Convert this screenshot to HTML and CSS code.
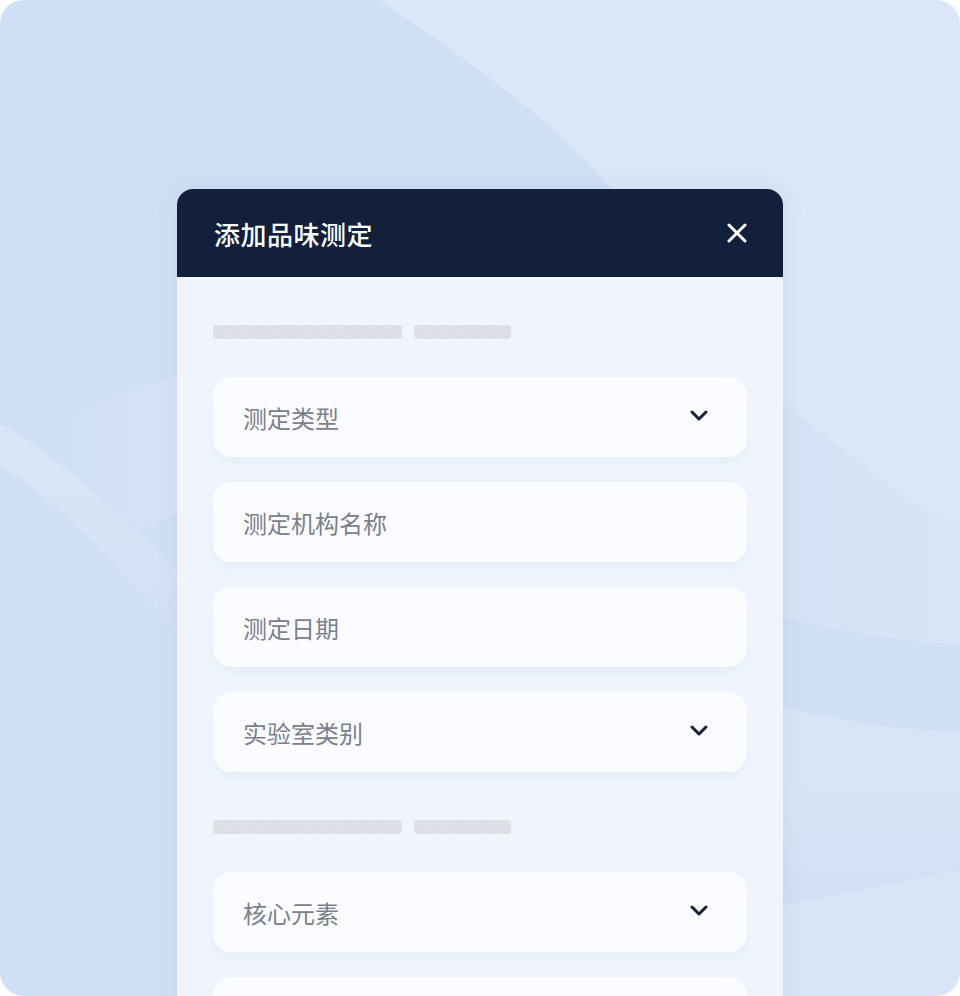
FILE: index.html
```html
<!DOCTYPE html>
<html lang="zh-CN">
<head>
    <meta charset="UTF-8">
    <meta name="viewport" content="width=device-width, initial-scale=1.0">
    <title>添加品味测定</title>
    <link rel="stylesheet" href="styles.css">
</head>
<body>
    <div class="frame">
        <div class="modal">
            <div class="modal-header">
                <h2>添加品味测定</h2>
                <button class="close" aria-label="关闭">
                    <svg width="20" height="20" viewBox="0 0 20 20"><path d="M2 2L18 18M18 2L2 18" stroke="#fff" stroke-width="3" stroke-linecap="round"/></svg>
                </button>
            </div>
            <div class="modal-body">
                <div class="section-label">
                    <span class="bar bar-long"></span>
                    <span class="bar bar-short"></span>
                </div>
                <div class="field-list">
                    <div class="field">
                        <span>测定类型</span>
                        <svg class="chevron" width="18" height="11" viewBox="0 0 18 11"><path d="M2 2L9 9L16 2" fill="none" stroke="#15203a" stroke-width="3" stroke-linecap="round" stroke-linejoin="round"/></svg>
                    </div>
                    <div class="field"><span>测定机构名称</span></div>
                    <div class="field"><span>测定日期</span></div>
                    <div class="field">
                        <span>实验室类别</span>
                        <svg class="chevron" width="18" height="11" viewBox="0 0 18 11"><path d="M2 2L9 9L16 2" fill="none" stroke="#15203a" stroke-width="3" stroke-linecap="round" stroke-linejoin="round"/></svg>
                    </div>
                </div>

                <div class="section-label">
                    <span class="bar bar-long"></span>
                    <span class="bar bar-short"></span>
                </div>
                <div class="field-list">
                    <div class="field">
                        <span>核心元素</span>
                        <svg class="chevron" width="18" height="11" viewBox="0 0 18 11"><path d="M2 2L9 9L16 2" fill="none" stroke="#15203a" stroke-width="3" stroke-linecap="round" stroke-linejoin="round"/></svg>
                    </div>
                    <div class="field"><span></span></div>
                </div>
            </div>
        </div>
    </div>
</body>
</html>
```

FILE: styles.css
```css
body {
    margin: 0;
    padding: 0;
    background-color: #fff;
    font-family: "Noto Sans CJK SC", "Noto Sans", sans-serif;
}

/* wavy backdrop drawn as an svg background */
.frame {
    width: 960px;
    height: 996px;
    border-radius: 24px;
    overflow: hidden;
    box-sizing: border-box;
    padding-top: 189px;
    display: flex;
    justify-content: center;
    align-items: flex-start;
    background-color: #cfdff5;
    background-repeat: no-repeat;
    background-image: url("data:image/svg+xml;utf8,<svg xmlns='http://www.w3.org/2000/svg' width='960' height='996' viewBox='0 0 960 996'><defs><linearGradient id='r1' x1='0' y1='0' x2='1' y2='0'><stop offset='0.6' stop-color='%23d3e1f5'/><stop offset='1' stop-color='%23d9e5f6'/></linearGradient><linearGradient id='r2' x1='0' y1='0' x2='0' y2='1'><stop offset='0.4' stop-color='%23d9e5f6'/><stop offset='1' stop-color='%23d1e0f5'/></linearGradient><linearGradient id='st' x1='0' y1='0' x2='0' y2='1'><stop offset='0.2' stop-color='%23dae5f6'/><stop offset='1' stop-color='%23d1e0f5'/></linearGradient><linearGradient id='ln' x1='0' y1='0' x2='1' y2='0'><stop offset='0.2' stop-color='%23d4e2f5' stop-opacity='0'/><stop offset='1' stop-color='%23d8e4f6'/></linearGradient></defs><path d='M380,0 C450,50 560,120 620,200 L700,520 C730,590 755,610 783,618 C840,632 900,640 960,645 L960,0 Z' fill='url(%23r1)'/><path d='M380,0 C450,50 560,120 620,200 C690,290 730,370 790,410 C860,460 920,515 960,525 L960,0 Z' fill='%23dbe6f6'/><path d='M600,700 C700,700 740,700 783,707 C850,722 900,730 960,732 L960,873 C900,885 840,900 783,905 L600,905 Z' fill='url(%23r2)'/><path d='M600,905 L783,905 C850,893 910,880 960,870 L960,996 L600,996 Z' fill='%23d9e5f6'/><path d='M20,440 C80,410 130,388 190,372 L190,512 C160,520 140,528 125,535 C90,500 60,470 20,440 Z' fill='url(%23ln)'/><path d='M0,424 C60,455 130,525 190,582 L190,648 C120,570 60,500 0,466 Z' fill='url(%23st)'/></svg>");
}

.modal {
    width: 606px;
    flex-shrink: 0;
    border-radius: 16px 16px 0 0;
    overflow: hidden;
    background-color: #f0f5fd;
    box-shadow: 0 0 24px rgba(60, 90, 140, 0.08);
}

.modal-header {
    height: 88px;
    box-sizing: border-box;
    padding: 0 34px 0 37px;
    display: flex;
    align-items: center;
    justify-content: space-between;
    background-color: #12203b;
}

.modal-header h2 {
    margin: 0;
    color: #fff;
    font-size: 26px;
    font-weight: 500;
    letter-spacing: 0.5px;
}

.close {
    width: 24px;
    height: 24px;
    padding: 0;
    border: none;
    background: none;
    display: flex;
    align-items: center;
    justify-content: center;
    cursor: pointer;
}

.modal-body {
    padding: 48px 36px 0 36px;
    height: 800px;
}

.section-label {
    display: flex;
    gap: 12px;
    height: 14px;
    margin-bottom: 38px;
}

.bar {
    display: block;
    height: 14px;
    border-radius: 4px;
    background-color: #d9dce2;
    background-image: repeating-linear-gradient(45deg, rgba(255, 255, 255, 0.18) 0 1px, transparent 1px 2px);
}

.bar-long {
    width: 189px;
}

.bar-short {
    width: 97px;
}

.field-list {
    display: flex;
    flex-direction: column;
    gap: 25px;
    margin-bottom: 48px;
}

.field {
    height: 80px;
    box-sizing: border-box;
    padding: 0 39px 0 30px;
    border-radius: 18px;
    background-color: #fafcff;
    box-shadow: 0 6px 12px rgba(90, 120, 170, 0.06);
    display: flex;
    align-items: center;
    justify-content: space-between;
    color: #7b808d;
    font-size: 24px;
}

.chevron {
    display: block;
    margin-top: -3px;
}
```
